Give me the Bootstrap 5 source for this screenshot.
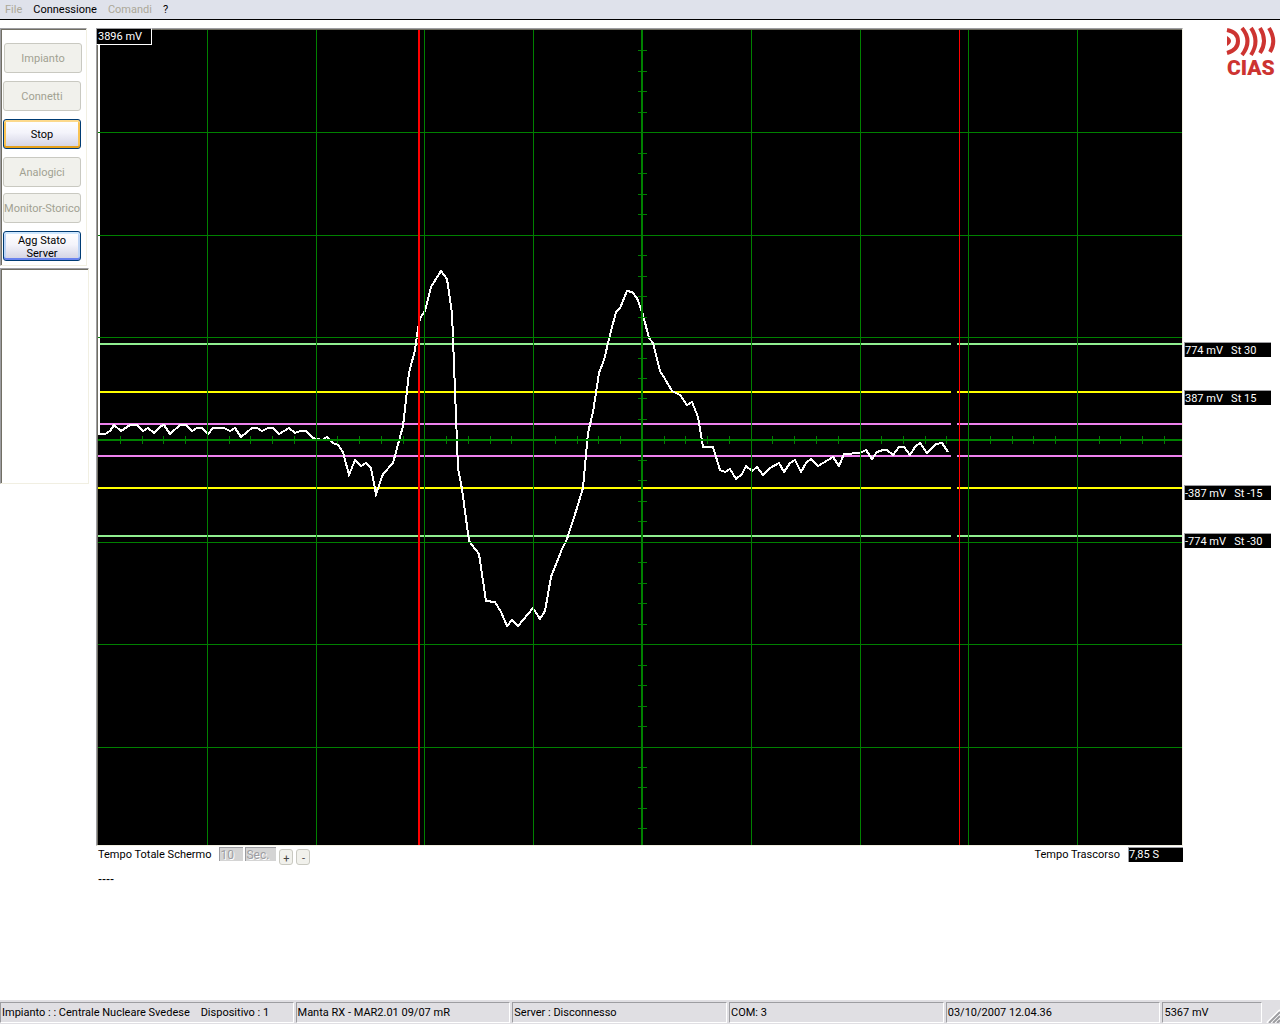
<!DOCTYPE html>
<html lang="it">
<head>
<meta charset="utf-8">
<meta name="viewport" content="width=device-width, initial-scale=1">
<title>CIAS Monitor</title>
<link href="https://cdn.jsdelivr.net/npm/bootstrap@5.3.0/dist/css/bootstrap.min.css" rel="stylesheet">
<style>
  body { font-family: Roboto, "Liberation Sans", sans-serif; font-size: 11px; line-height: 14px; color: #000; background: #fff; }
  .menu-strip { background: #dfe2eb; border-bottom: 1px solid #000; height: 20px; padding-left: 5px; gap: 11px; }
  .menu-strip a { color: #000; line-height: 19px; text-decoration: none; }
  .menu-strip a.off { color: #aca899; }
  .side { width: 89px; flex: none; gap: 2px; }
  .sunken { border: 1px solid; border-color: #9d9da1 #f1efe2 #f1efe2 #9d9da1; box-shadow: inset 1px 1px 0 #716f64; }
  .cmd-panel { width: 87px; padding: 14px 4px 4px 2px; gap: 8px; }
  .log-panel { height: 216px; }
  .xp { width: 78px; height: 30px; padding: 1px 0 0; font-size: 11px; line-height: 13px; border-radius: 3px; border: 1px solid #003c74; color: #000;
        background: linear-gradient(#fff, #f4f4fb 45%, #d0d0e2); }
  .xp:disabled { background: #f1f1ec; border: 1px solid #c9c9c1; padding: 0; color: #a1a192; white-space: nowrap; }
  .xp.active-cmd { box-shadow: inset 0 2px #fcd98c, inset 0 -2px #e5a01b, inset 2px 0 #f9c353, inset -2px 0 #f9c353; padding: 0; }
  .xp.focus-cmd { box-shadow: inset 0 2px #cee7ff, inset 0 -2px #6982ee, inset 2px 0 #bcd4f6, inset -2px 0 #bcd4f6; }
  .first-cmd { margin-left: 1px; }
  .close-cmd { margin-top: -2px; }
  .scope-col { margin-left: 7px; }
  .scope-wrap { border: 1px solid; border-color: #9d9da1 #f1efe2 #f1efe2 #9d9da1; }
  .scope-inner { border-top: 1px solid #716f64; border-left: 1px solid #716f64; background: #000; }
  .scope-inner svg { display: block; width: 100%; height: auto; }
  .peak { position: absolute; left: -1px; top: -1px; width: 56px; height: 17px; background: #000; color: #fff; border: 1px solid #fff; border-left-color: #9d9da1; border-top-color: #9d9da1; line-height: 15px; padding-left: 1px; }
  .right-col { width: 97px; flex: none; padding-left: 1px; }
  .brand-logo { margin: 0 5px 265px auto; display: block; overflow: visible; }
  .tag { width: 87px; height: 15px; background: #000; color: #fff; border-top: 1px solid #9d9da1; border-left: 1px solid #9d9da1; line-height: 15px; white-space: pre; }
  .gap-near { margin-bottom: 33px; }
  .gap-mid { margin-bottom: 80px; }
  .time-row { line-height: 16px; padding: 1px 0 0 2px; }
  .dim { height: 14px; border: 0; border-top: 1px solid #9d9da1; border-left: 1px solid #9d9da1; border-radius: 0; background: #d4d4d4; color: #9d9da1; text-shadow: 1px 1px #fff; font-size: 12px; line-height: 13px; padding: 0; }
  .dim-num { width: 24px; margin-left: 8px; }
  .dim-unit { width: 31px; margin: 0 3px 0 2px; }
  .step { width: 14px; height: 16px; margin: 2px 3px 0 0; padding: 3px 0 0; border: 1px solid #c9c9c1; border-radius: 3px; background: #f1f1ec; font-size: 11px; line-height: 12px; color: #444; }
  .elapsed { width: 55px; height: 15px; margin-left: 8px; background: #000; color: #fff; border-top: 1px solid #9d9da1; border-left: 1px solid #9d9da1; line-height: 14px; }
  .note-line { padding: 7px 2px; font-family: "Liberation Sans", sans-serif; font-size: 12px; }
  .status-strip { background: #e0dfe3; height: 24px; padding: 2px 0 1px; gap: 2px; }
  .status-strip div { border: 1px solid; border-color: #9d9da1 #fff #fff #9d9da1; line-height: 20px; padding-left: 1px; white-space: pre; overflow: hidden; height: 21px; }
  .w-plant { flex: 295 1 0; } .w-cell { flex: 215 1 0; } .w-volt { flex: 98 1 0; }
</style>
<script src="https://cdn.jsdelivr.net/npm/bootstrap@5.3.0/dist/js/bootstrap.bundle.min.js"></script>
</head>
<body class="d-flex flex-column min-vh-100">
<nav class="menu-strip d-flex">
  <a class="off" href="#">File</a><a href="#">Connessione</a><a class="off" href="#">Comandi</a><a href="#">?</a>
</nav>
<main class="d-flex align-items-start flex-grow-1 pt-2">
  <aside class="side d-flex flex-column">
    <div class="sunken cmd-panel d-flex flex-column">
      <button class="xp first-cmd" disabled>Impianto</button>
      <button class="xp" disabled>Connetti</button>
      <button class="xp active-cmd">Stop</button>
      <button class="xp" disabled>Analogici</button>
      <button class="xp close-cmd" disabled>Monitor-Storico</button>
      <button class="xp focus-cmd">Agg Stato<br>Server</button>
    </div>
    <div class="sunken log-panel"></div>
  </aside>
  <section class="scope-col flex-grow-1">
    <div class="position-relative scope-wrap">
      <div class="scope-inner">
        <svg viewBox="98 30 1084 815" role="img" aria-label="Segnale mV" shape-rendering="crispEdges" fill="none">
          <g stroke-width="2">
            <path stroke="#90ee90" d="M98 344H951M957 344H1182M98 536H951M957 536H1182"/>
            <path stroke="#ff0" d="M98 392H951M957 392H1182M98 488H951M957 488H1182"/>
            <path stroke="#ee82ee" d="M98 424H951M957 424H1182M98 456H951M957 456H1182"/>
          </g>
          <polyline stroke="#fff" stroke-width="2" points="99,30 99,434 105,434 110,431 114,425 121,431 130,425 137,425 143,431 148,428 154,433 161,426 164,425 170,434 180,425 186,425 192,431 197,428 202,428 208,434 213,428 224,428 230,431 235,428 241,437 252,428 257,428 262,431 268,428 273,428 279,434 289,428 295,433 300,431 306,431 313,438 322,440 327,437 333,443 338,445 343,452 349,475 355,460 361,466 366,463 371,468 376,494 383,474 393,463 403,426 409,373 415,350 418,329 420,318 425,311 431,287 441,271 447,279 452,313 458,468 462,489 469,541 479,554 486,601 495,602 501,612 507,626 512,620 518,626 533,608 540,619 545,611 551,577 562,549 567,539 577,508 583,488 588,433 593,412 599,373 604,360 610,335 616,312 620,308 627,291 632,292 637,298 643,315 649,338 653,343 660,371 665,379 672,391 680,395 687,405 692,402 698,417 703,447 713,447 720,470 725,472 730,469 736,479 742,474 746,466 752,471 757,467 763,475 770,468 779,463 784,472 790,463 795,460 801,472 806,463 811,459 818,466 833,457 839,466 844,454 860,453 866,450 872,459 877,452 883,450 887,450 893,455 899,447 904,447 910,455 915,447 920,443 927,453 936,444 942,443 948,452"/>
          <path stroke="green" d="M98 132.5H1182M98 235.5H1182M98 337.5H1182M98 542.5H1182M98 644.5H1182M98 747.5H1182M207.5 30V845M316.5 30V845M424.5 30V845M533.5 30V845M751.5 30V845M860.5 30V845M968.5 30V845M1077.5 30V845"/>
          <path stroke="green" stroke-width="2" d="M98 440H1182M642 30V845"/>
          <path id="ticks" stroke="green"/>
          <path stroke="red" stroke-width="2" d="M419 30V845"/>
          <path stroke="red" d="M959.5 30V845"/>
        </svg>
      </div>
      <div class="peak">3896 mV</div>
    </div>
    <div class="time-row d-flex align-items-start">
      <label for="span">Tempo Totale Schermo</label>
      <input id="span" class="dim dim-num" value="10" disabled>
      <input class="dim dim-unit" value="Sec." aria-label="Unità" disabled>
      <button class="step" disabled>+</button>
      <button class="step" disabled>-</button>
      <span class="ms-auto">Tempo Trascorso</span>
      <output class="elapsed">7,85 S</output>
    </div>
    <div class="note-line">----</div>
  </section>
  <aside class="right-col">
    <svg class="brand-logo" width="48" height="49" viewBox="0 0 48 49" role="img" aria-label="CIAS">
      <path fill="#cd3431" d="M0 8q8 5 0 10z"/>
      <g fill="none" stroke="#cd3431" stroke-width="4">
        <path d="M0 2Q11 4 11 13T0 25"/>
        <path d="M15 0q11 13 0 27"/><path d="M24 0q9 13 0 27"/><path d="M33 0q8 13 0 25"/><path d="M42 0q8 13 1 24"/>
      </g>
      <text x="0" y="47" font-family="Roboto, sans-serif" font-weight="900" font-size="21" fill="#cd3431">CIAS</text>
    </svg>
    <div class="tag gap-near">774 mV   St 30</div>
    <div class="tag gap-mid">387 mV   St 15</div>
    <div class="tag gap-near">-387 mV   St -15</div>
    <div class="tag">-774 mV   St -30</div>
  </aside>
</main>
<footer class="status-strip d-flex">
  <div class="w-plant">Impianto : : Centrale Nucleare Svedese    Dispositivo : 1</div>
  <div class="w-cell">Manta RX - MAR2.01 09/07 mR</div>
  <div class="w-cell">Server : Disconnesso</div>
  <div class="w-cell">COM: 3</div>
  <div class="w-cell">03/10/2007 12.04.36</div>
  <div class="w-volt">5367 mV</div>
  <svg class="align-self-end flex-shrink-0" width="16" height="14" viewBox="-2 0 16 14"><path stroke="#fff" stroke-width="2" d="M1 14L14 1M5 14L14 5M9 14L14 9"/><path stroke="#9d9da1" stroke-width="2" d="M3 14L14 3M7 14L14 7M11 14L14 11"/></svg>
</footer>
<script>
  // minor divisions: five per major division on both axes
  let d = "";
  for (let i = 1; i < 50; i++) if (i % 5) {
    const x = Math.floor(98.5 + i * 21.75) + 0.5; d += `M${x} 436V444`;
  }
  for (let i = 1; i < 40; i++) if (i % 5) {
    const y = Math.floor(30.5 + i * 20.47) + 0.5; d += `M638 ${y}H647`;
  }
  document.getElementById("ticks").setAttribute("d", d);
</script>
</body>
</html>
